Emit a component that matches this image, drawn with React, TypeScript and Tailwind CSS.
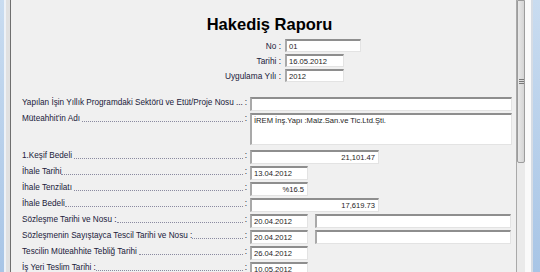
import React from "react";

type Row = {
  label: string;
  dots: boolean;
  w: string;
  h?: string;
  value: string;
  right?: boolean;
  second?: boolean;
  gapTop?: string;
};

const rows: Row[] = [
  { label: "Yapılan İşin Yıllık Programdaki Sektörü ve Etüt/Proje Nosu ...", dots: false, w: "w-[262px]", value: "" },
  { label: "Müteahhit'in Adı ", dots: true, w: "w-[262px]", h: "h-[32px]", value: "İREM İnş.Yapı :Malz.San.ve Tic.Ltd.Şti." },
  { label: "1.Keşif Bedeli ", dots: true, w: "w-[129px]", value: "21,101.47", right: true, gapTop: "mt-[3px]" },
  { label: "İhale Tarihi", dots: true, w: "w-[58px]", value: "13.04.2012" },
  { label: "İhale Tenzilatı ", dots: true, w: "w-[58px]", value: "%16.5", right: true },
  { label: "İhale Bedeli", dots: true, w: "w-[129px]", value: "17,619.73", right: true },
  { label: "Sözleşme Tarihi ve Nosu :", dots: true, w: "w-[58px]", value: "20.04.2012", second: true },
  { label: "Sözleşmenin Sayıştayca Tescil Tarihi ve Nosu :", dots: true, w: "w-[58px]", value: "20.04.2012", second: true },
  { label: "Tescilin Müteahhite Tebliğ Tarihi ", dots: true, w: "w-[58px]", value: "26.04.2012" },
  { label: "İş Yeri Teslim Tarihi :", dots: true, w: "w-[58px]", value: "10.05.2012" },
];

// sunken white edit box
const Field = ({ w, h = "h-[14px]", value, right }: { w: string; h?: string; value: string; right?: boolean }) => (
  <div
    className={`${w} ${h} shrink-0 bg-white border-t-2 border-l-2 border-r border-b border-t-[#8e8e8e] border-l-[#a9a9a9] border-r-[#e3e3e3] border-b-[#e3e3e3] px-[2px] pt-[1px] text-[7.6px] leading-[9px] text-[#1c1c1c] overflow-hidden whitespace-nowrap ${right ? "text-right pr-[3px]" : ""}`}
  >
    {value}
  </div>
);

const App = () => {
  return (
    <div className="w-[540px] h-[272px] overflow-hidden flex bg-[#f0f0f0] font-['Liberation_Sans',Arial,sans-serif]">
      {/* window frame left */}
      <div className="w-[4px] shrink-0 bg-gradient-to-b from-[#c9dcf0] to-[#a8c5e6]" />
      <div className="w-[2px] shrink-0 bg-[#eef2f7]" />
      <div className="w-[4px] shrink-0 bg-[#e1e1e1]" />
      <div className="w-[1px] shrink-0 bg-[#6f6f6f]" />

      {/* form panel */}
      <div className="flex-1 flex flex-col pt-[16px] text-[#20203a]">
        <h1 className="text-[16.5px] font-bold leading-[16px] text-black text-center pl-[12px]">Hakediş Raporu</h1>

        <div className="flex flex-col gap-[2px] mt-[7px] text-[8.3px]">
          <div className="flex items-center gap-[4px] h-[13px]">
            <span className="w-[270px] text-right leading-[10px]">No :</span>
            <Field w="w-[76px]" h="h-[13px]" value="01" />
          </div>
          <div className="flex items-center gap-[4px] h-[13px]">
            <span className="w-[270px] text-right leading-[10px]">Tarihi :</span>
            <Field w="w-[59px]" h="h-[13px]" value="16.05.2012" />
          </div>
          <div className="flex items-center gap-[4px] h-[13px]">
            <span className="w-[270px] text-right leading-[10px]">Uygulama Yılı :</span>
            <Field w="w-[59px]" h="h-[13px]" value="2012" />
          </div>
        </div>

        <div className="flex flex-col gap-[2px] mt-[15px] pl-[11px] text-[8.2px]">
          {rows.map((r, i) => (
            <div key={i} className={`flex ${r.gapTop ?? ""}`}>
              <div className="w-[228px] shrink-0 flex items-end h-[11px] whitespace-nowrap">
                <span className="whitespace-pre leading-[10px]">{r.label}</span>
                <span className={`flex-1 mb-[2px] ${r.dots ? "border-b border-dotted border-[#8a8aa0]" : ""}`} />
                <span className="w-[7px] pr-[3px] text-right leading-[10px]">:</span>
              </div>
              <Field w={r.w} h={r.h} value={r.value} right={r.right} />
              {r.second && <div className="ml-[7px]"><Field w="w-[196px]" value="" /></div>}
            </div>
          ))}
        </div>
      </div>

      {/* scrollbar */}
      <div className="w-[1px] shrink-0 bg-[#a9a9a9]" />
      <div className="w-[14px] shrink-0 flex">
        <div className="w-[8px] flex flex-col bg-[#eaeaea]">
          <div className="h-[163px] bg-gradient-to-r from-[#e8e8e8] to-[#d4d4d4] border border-[#9c9c9c] rounded-b-[2px] flex flex-col items-center justify-center gap-[1px]">
            <div className="w-[5px] h-[1px] bg-[#777]" />
            <div className="w-[5px] h-[1px] bg-[#777]" />
            <div className="w-[5px] h-[1px] bg-[#777]" />
          </div>
        </div>
        <div className="w-[6px] bg-[#fafafa]" />
      </div>
      <div className="w-[2px] shrink-0 bg-[#d6dce4]" />
      <div className="w-[7px] shrink-0 bg-gradient-to-b from-[#c9dcf0] to-[#a8c5e6]" />
    </div>
  );
};

export default App;
